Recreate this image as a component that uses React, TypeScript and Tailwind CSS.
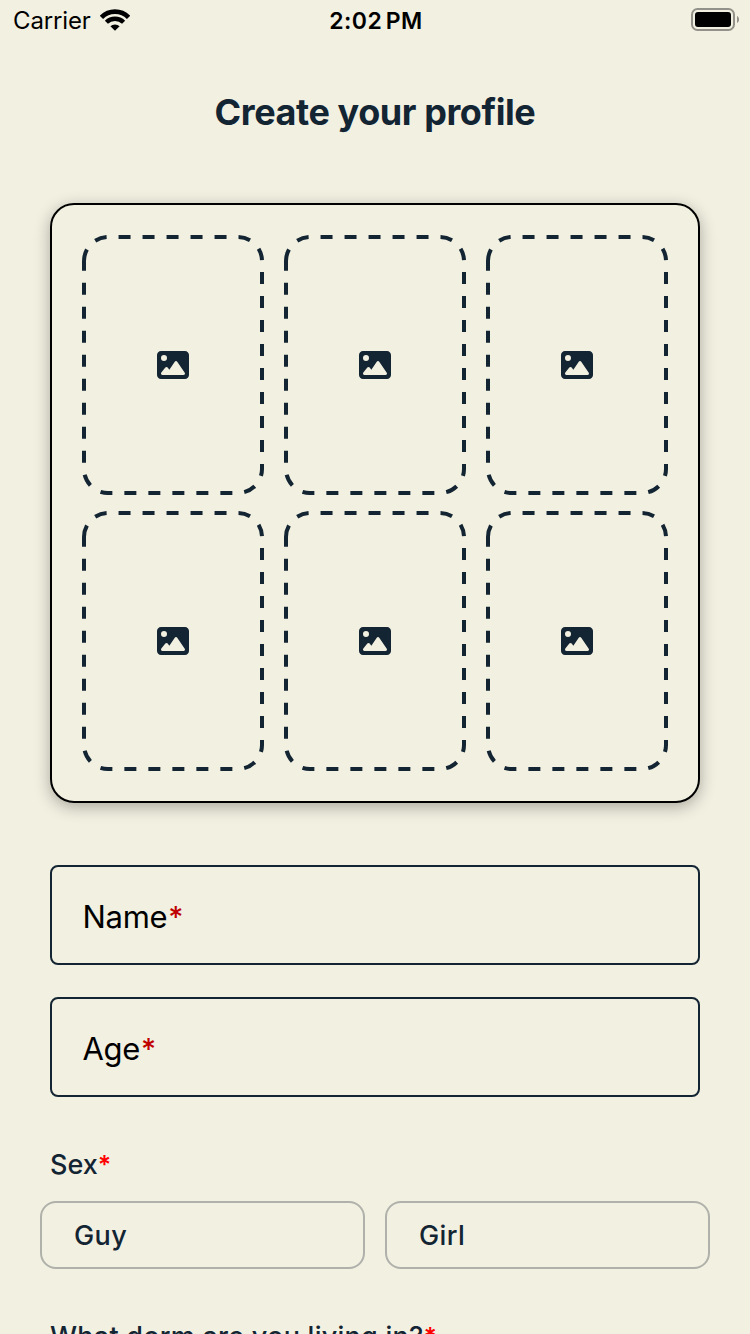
import React from "react";
import { FaImage } from "react-icons/fa6";

function StatusBar() {
  return (
    <header className="grid h-10 grid-cols-3 items-center pl-[13px] pr-[11px] text-black">
      <div className="flex items-center gap-[9px]">
        <span className="pt-0.5 text-[24px] leading-[38px] tracking-[-0.15px]">Carrier</span>
        <svg width="30" height="22" viewBox="0 0 30 22">
          <path d="M1.4 8.4A18.9 18.9 0 0 1 28.6 8.4" fill="none" stroke="#000" strokeWidth="4.7" />
          <path d="M6.4 13.3A12.2 12.2 0 0 1 23.6 13.3" fill="none" stroke="#000" strokeWidth="4.4" />
          <path d="M15 21.8L10.4 17.3A6.6 6.6 0 0 1 19.6 17.3Z" fill="#000" />
        </svg>
      </div>
      <div className="pt-0.5 text-center text-[23px] font-semibold leading-[38px] tracking-[0.4px] [word-spacing:-2.5px]">2:02 PM</div>
      <div className="flex justify-end">
        <svg width="48" height="24" viewBox="0 0 48 24">
          <rect x="1" y="1" width="42" height="21" rx="5.5" fill="none" stroke="#93928a" strokeWidth="2" />
          <rect x="4" y="4" width="36" height="15" rx="3" fill="#000" />
          <path d="M46 8C48.7 9.2 48.7 13.8 46 15Z" fill="#93928a" />
        </svg>
      </div>
    </header>
  );
}

function PhotoSlot() {
  return (
    <button type="button" aria-label="Add photo" className="grid h-[260px] w-[182px] place-items-center text-[#132433]">
      <svg width="182" height="260" viewBox="0 0 182 260" className="col-start-1 row-start-1">
        <path
          d="M2 26A24 24 0 0 1 26 2H156A24 24 0 0 1 180 26V234A24 24 0 0 1 156 258H26A24 24 0 0 1 2 234Z"
          fill="none"
          stroke="currentColor"
          strokeWidth="4"
          strokeDasharray="12 12"
        />
      </svg>
      <FaImage size={32} className="col-start-1 row-start-1" />
    </button>
  );
}

function Field({ label }: { label: string }) {
  return (
    <div className="flex h-[100px] items-center rounded-lg border-2 border-[#132433] pl-[30.5px] pt-1 text-[31px] tracking-[-0.3px] text-black">
      <span>{label}</span>
      <span className="ml-px text-[29px] font-medium leading-9 text-[#c00000]">*</span>
    </div>
  );
}

function Label({ text, className = "" }: { text: string; className?: string }) {
  return (
    <div className={`text-[27px] font-medium leading-8 text-[#132433] ${className}`}>
      {text}
      <span className="text-[25px] font-semibold leading-none text-[#ff0000]">*</span>
    </div>
  );
}

function Option({ text }: { text: string }) {
  return (
    <button
      type="button"
      className="flex h-[68px] items-center rounded-2xl border-2 border-[#afb1aa] pl-8 pt-0.5 text-left text-[27px] font-medium tracking-[0.4px] text-[#132433]"
    >
      {text}
    </button>
  );
}

export default function App() {
  return (
    <div className="h-[1334px] overflow-hidden bg-[#f2f0e1] font-['Inter','Liberation_Sans',sans-serif]">
      <StatusBar />
      <h1 className="mt-12 text-center text-[36px] font-bold leading-[48px] tracking-[-0.42px] text-[#132433]">
        Create your profile
      </h1>
      <main className="mt-[67px] px-[50px]">
        <section className="grid h-[600px] grid-cols-3 content-start gap-x-5 gap-y-4 rounded-3xl border-2 border-black bg-[#f2f0e1] px-[30px] pt-[30px] shadow-[0_4px_16px_rgba(0,0,0,0.3)]">
          {[0, 1, 2, 3, 4, 5].map((slot) => (
            <PhotoSlot key={slot} />
          ))}
        </section>
        <div className="mt-[62px] flex flex-col gap-8">
          <Field label="Name" />
          <Field label="Age" />
        </div>
        <div className="mt-[52px]">
          <Label text="Sex" />
        </div>
        <div className="-mx-2.5 mt-5 grid grid-cols-2 gap-5">
          <Option text="Guy" />
          <Option text="Girl" />
        </div>
        <div className="mt-[52px]">
          <Label text="What dorm are you living in?" className="tracking-[0.25px]" />
        </div>
      </main>
    </div>
  );
}
